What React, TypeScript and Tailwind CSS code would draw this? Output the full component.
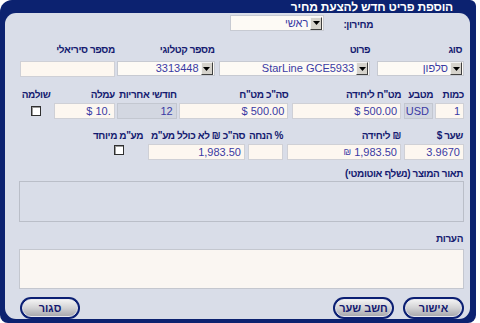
import React from 'react'

const font = { fontFamily: '"Liberation Sans", "DejaVu Sans", Arial, sans-serif' }

const Label = ({ children, className = '' }: { children: React.ReactNode; className?: string }) => (
  <div className={`h-[13px] text-[10px] leading-[13px] font-bold tracking-[-0.4px] text-[#141a70] whitespace-nowrap ${className}`}>
    {children}
  </div>
)

const Arrow = () => (
  <div className="flex h-[13px] w-[12px] items-center justify-center border border-t-[#f4f4f4] border-l-[#f4f4f4] border-r-[#404040] border-b-[#404040] bg-[#d6d3cc] mr-[1px]">
    <svg width="7" height="4" viewBox="0 0 7 4">
      <path d="M0 0h7L3.5 4z" fill="#000" />
    </svg>
  </div>
)

const Select = ({ value, className = '' }: { value: string; className?: string }) => (
  <div dir="ltr" className={`flex h-[15px] items-center border border-[#c7cad2] bg-[#fdfaf5] ${className}`}>
    <span className="flex-1 pr-[2px] text-right text-[11px] leading-[13px] text-[#3a3aa4] whitespace-nowrap overflow-hidden">
      {value}
    </span>
    <Arrow />
  </div>
)

const Field = ({ children, gray = false, className = '' }: { children?: React.ReactNode; gray?: boolean; className?: string }) => (
  <div
    dir="ltr"
    className={`flex h-[16px] items-center justify-end gap-[3px] border px-[3px] text-[11px] leading-[13px] text-[#3a3aa4] whitespace-nowrap ${
      gray ? 'border-[#c3c7d0] bg-[#d3d7e1]' : 'border-[#cfd0d6] bg-[#fdf7f0]'
    } ${className}`}
  >
    {children}
  </div>
)

const Check = () => (
  <div className="h-[10px] w-[10px] border border-[#303030] bg-white shadow-[inset_1px_1px_0_#9a9a9a]" />
)

const Button = ({ children, className = '' }: { children: React.ReactNode; className?: string }) => (
  <div className={`h-[22px] rounded-full bg-[#0b1f73] p-[2px] ${className}`}>
    <div className="flex h-full items-center justify-center rounded-full border border-[#e8e8ee] bg-gradient-to-b from-[#f2f2f2] via-[#d2d2d4] to-[#a9a9ae] text-[11px] font-bold text-[#141a70]">
      {children}
    </div>
  </div>
)

export default function App() {
  return (
    <div className="h-[323px] w-[480px] bg-white" style={font}>
      <div className="flex h-[323px] w-[476px] flex-col rounded-tl-[12px] rounded-tr-[6px] rounded-b-[8px] bg-[#0c2270] px-[5px] pb-[5px] pl-[5px] pr-[6px]">
        {/* TITLE */}
        <div dir="rtl" className="h-[13px] pr-[17px] text-[12px] font-bold leading-[14px] tracking-[-0.2px] text-white">
          הוספת פריט חדש להצעת מחיר
        </div>

        {/* PANEL */}
        <div dir="rtl" className="flex flex-1 flex-col rounded-[11px] bg-[#d9dde8] pl-[15px] pr-[6px]">
          {/* pricelist */}
          <div className="mt-[2px] flex h-[16px] items-center pr-[91px]">
            <Label className="ml-[19px] mt-[2px]">מחירון:</Label>
            <Select value="ראשי" className="h-[16px] w-[94px]" />
          </div>

          {/* row 2 */}
          <div className="mt-[12px] flex">
            <div className="ml-[7px] w-[87px]">
              <Label className="text-right pr-[2px]">סוג</Label>
              <Select value="סלפון" className="mt-[5px]" />
            </div>
            <div className="ml-[4px] w-[152px]">
              <Label className="text-right">פרוט</Label>
              <Select value="StarLine GCE5933" className="mt-[5px]" />
            </div>
            <div className="ml-[2px] w-[98px]">
              <Label className="text-right">מספר קטלוגי</Label>
              <Select value="3313448" className="mt-[5px]" />
            </div>
            <div className="w-[95px]">
              <Label className="text-right">מספר סיריאלי</Label>
              <Field className="mt-[5px] h-[15px]" />
            </div>
          </div>

          {/* row 3 */}
          <div className="mt-[11px] flex">
            <div className="ml-[2px] w-[29px]">
              <Label>כמות</Label>
              <Field className="mt-[2px]">1</Field>
            </div>
            <div className="ml-[3px] w-[29px]">
              <Label>מטבע</Label>
              <Field gray className="mt-[2px]">USD</Field>
            </div>
            <div className="ml-[4px] w-[109px]">
              <Label>{'מט"ח ליחידה'}</Label>
              <Field className="mt-[2px]">
                <span>$</span>
                <span>500.00</span>
              </Field>
            </div>
            <div className="ml-[2px] w-[110px]">
              <Label>{'סה"כ מט"ח'}</Label>
              <Field className="mt-[2px]">
                <span>$</span>
                <span>500.00</span>
              </Field>
            </div>
            <div className="ml-[2px] w-[60px]">
              <Label>חודשי אחריות</Label>
              <Field gray className="mt-[2px]">12</Field>
            </div>
            <div className="ml-[2px] w-[61px]">
              <Label>עמלה</Label>
              <Field className="mt-[2px]">
                <span>$</span>
                <span>10.</span>
              </Field>
            </div>
            <div className="flex w-[32px] flex-col items-center">
              <Label>שולמה</Label>
              <div className="mt-[5px]">
                <Check />
              </div>
            </div>
          </div>

          {/* row 4 */}
          <div className="mt-[10px] flex">
            <div className="ml-[3px] w-[60px]">
              <Label className="pr-[1px]">שער $</Label>
              <Field className="mt-[2px]">3.9670</Field>
            </div>
            <div className="ml-[4px] w-[114px]">
              <Label>₪ ליחידה</Label>
              <Field className="mt-[2px]">
                <span className="text-[9px]">₪</span>
                <span>1,983.50</span>
              </Field>
            </div>
            <div className="ml-[3px] w-[35px]">
              <Label>% הנחה</Label>
              <Field className="mt-[2px]" />
            </div>
            <div className="ml-[4px] w-[97px]">
              <Label>{'סה"כ ₪ לא כולל מע"מ'}</Label>
              <Field className="mt-[2px]">1,983.50</Field>
            </div>
            <div className="flex w-[50px] flex-col items-center">
              <Label className="pr-[2px]">{'מע"מ מיוחד'}</Label>
              <div className="mt-[3px]">
                <Check />
              </div>
            </div>
          </div>

          {/* description */}
          <Label className="mt-[7px] pr-[1px]">תאור המוצר (נשלף אוטומטי)</Label>
          <div className="-ml-[1px] mt-[1px] h-[41px] border border-[#babec8] bg-[#d9dde8]" />

          {/* notes */}
          <Label className="mt-[10px] pr-[1px]">הערות</Label>
          <div className="-ml-[1px] mt-[4px] h-[40px] border border-[#c4c7cf] bg-[#faf6f2]" />

          {/* buttons */}
          <div className="mt-[8px] flex items-center justify-between">
            <div className="flex gap-[9px]">
              <Button className="w-[61px]">אישור</Button>
              <Button className="w-[61px]">חשב שער</Button>
            </div>
            <Button className="w-[60px]">סגור</Button>
          </div>
        </div>
      </div>
    </div>
  )
}
